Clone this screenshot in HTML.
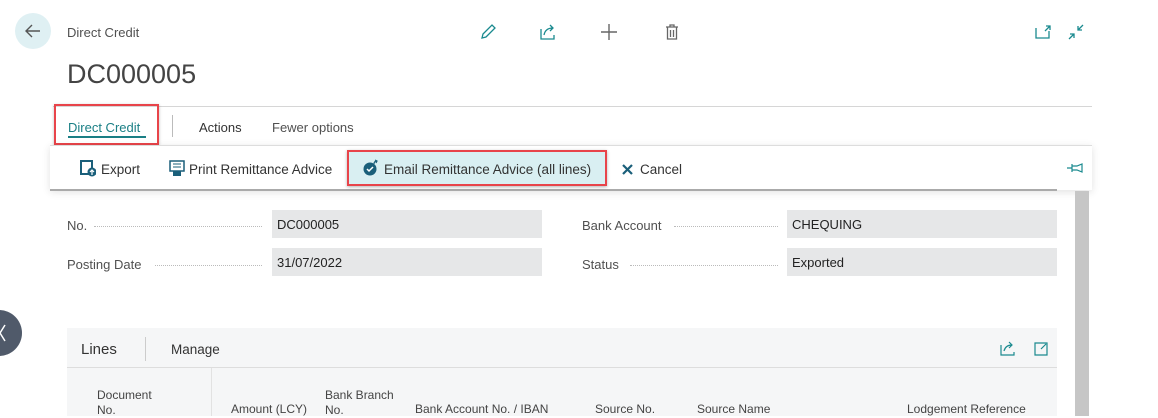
<!DOCTYPE html><html><head><style>
body{margin:0;width:1158px;height:416px;overflow:hidden;background:#fff;font-family:"Liberation Sans",sans-serif;position:relative;color:#333}
.a{position:absolute;white-space:nowrap}
.lbl{font-size:13px;color:#505050}
.box{position:absolute;background:#e6e7e8;font-size:13px;color:#222;line-height:29px;padding-left:5px;box-sizing:border-box}
.dots{position:absolute;border-bottom:1px dotted #bbb;height:0}
.h{font-size:12px;color:#444;position:absolute;line-height:15px}
</style></head><body>
<div class="a" style="left:15px;top:13px;width:36px;height:36px;border-radius:50%;background:#dff0f3"></div>
<svg class="a" style="left:24px;top:22px" width="18" height="18"><path d="M16 9H2M8 3L2 9l6 6" stroke="#555" stroke-width="1.4" fill="none"/></svg>
<div class="a lbl" style="left:67px;top:25px">Direct Credit</div>
<div class="a" style="left:67px;top:59px;font-size:27px;color:#444">DC000005</div>
<svg class="a" style="left:479px;top:23px" width="18" height="18"><path d="M3 15l1-4 9-9 3 3-9 9z" stroke="#1a8a8f" stroke-width="1.3" fill="none"/></svg>
<svg class="a" style="left:539px;top:23px" width="18" height="18"><path d="M2 6v10h13v-4M5 12c1-5 4-7 9-7M11 2l3 3-3 3" stroke="#1a8a8f" stroke-width="1.3" fill="none"/></svg>
<svg class="a" style="left:600px;top:23px" width="18" height="18"><path d="M9 1v16M1 9h16" stroke="#666" stroke-width="1.4"/></svg>
<svg class="a" style="left:664px;top:23px" width="16" height="18"><path d="M2 4h12M6 4V2h4v2M3.5 4v12h9V4M6.5 7v7M9.5 7v7" stroke="#666" stroke-width="1.3" fill="none"/></svg>
<svg class="a" style="left:1034px;top:24px" width="20" height="16"><path d="M2 4v10h13V7M12 2h4v4M16 2l-5 5" stroke="#1a8a8f" stroke-width="1.3" fill="none"/></svg>
<svg class="a" style="left:1067px;top:23px" width="18" height="18"><path d="M2 16l5-5M3 11h4v4M16 2l-5 5M11 3v4h4" stroke="#1a8a8f" stroke-width="1.3" fill="none"/></svg>
<div class="a" style="left:53px;top:106px;width:1039px;height:1px;background:#d6d6d6"></div>
<div class="a" style="left:68px;top:120px;font-size:13px;color:#1a7f85">Direct Credit</div>
<div class="a" style="left:68px;top:136px;width:78px;height:2px;background:#1a7f85"></div>
<div class="a" style="left:54px;top:104px;width:101px;height:37px;border:2px solid #e8444a;box-shadow:0 1px 3px rgba(0,0,0,.25)"></div>
<div class="a" style="left:172px;top:115px;width:1px;height:22px;background:#bbb"></div>
<div class="a" style="left:199px;top:120px;font-size:13px;color:#333">Actions</div>
<div class="a" style="left:272px;top:120px;font-size:13px;color:#505050">Fewer options</div>
<div class="a" style="left:50px;top:145px;width:1042px;height:44px;background:#fff;border-top:1px solid #ddd;box-shadow:0 2px 8px rgba(0,0,0,.12)"></div>
<div class="a" style="left:50px;top:189px;width:1007px;height:2px;background:#aaa"></div>
<div class="a" style="left:1075px;top:191px;width:14px;height:225px;background:#c6c6c6"></div>
<svg class="a" style="left:80px;top:160px" width="16" height="17"><rect x="1" y="1" width="11" height="13" fill="none" stroke="#1a5f7a" stroke-width="2"/><circle cx="12" cy="12" r="4.5" fill="#1a5f7a"/><path d="M12 15V10M10 12l2-2 2 2" stroke="#fff" stroke-width="1.2" fill="none"/></svg>
<div class="a" style="left:101px;top:162px;font-size:13.5px">Export</div>
<svg class="a" style="left:169px;top:160px" width="16" height="17"><rect x="1" y="1" width="14" height="10" fill="none" stroke="#1a5f7a" stroke-width="1.5"/><path d="M4 4h8M4 7h8" stroke="#1a5f7a"/><rect x="4" y="11" width="8" height="5" fill="#1a5f7a"/></svg>
<div class="a" style="left:189px;top:162px;font-size:13.5px">Print Remittance Advice</div>
<div class="a" style="left:349px;top:152px;width:256px;height:32px;background:#d9eff2"></div>
<div class="a" style="left:347px;top:150px;width:256px;height:32px;border:2px solid #e8444a;box-shadow:0 1px 3px rgba(0,0,0,.3)"></div>
<svg class="a" style="left:363px;top:159px" width="16" height="18"><circle cx="7" cy="10" r="6.5" fill="#1a5f7a"/><path d="M4 10l2 2 4-4" stroke="#fff" stroke-width="1.5" fill="none"/><path d="M11 5c0-2 1-3 3-3M12 1l2 1-1 2" stroke="#1a5f7a" stroke-width="1.2" fill="none"/></svg>
<div class="a" style="left:384px;top:162px;font-size:13.5px">Email Remittance Advice (all lines)</div>
<svg class="a" style="left:621px;top:163px" width="13" height="13"><path d="M2 2l9 9M11 2l-9 9" stroke="#1a5f7a" stroke-width="2.2"/></svg>
<div class="a" style="left:640px;top:162px;font-size:13.5px">Cancel</div>
<svg class="a" style="left:1066px;top:161px" width="20" height="14"><path d="M1 7h5M6 3v8M6 5h5l5-2v8l-5-2H6" stroke="#1a8a8f" stroke-width="1.2" fill="none"/></svg>
<div class="a lbl" style="left:67px;top:218px">No.</div><div class="dots" style="left:94px;top:226px;width:168px"></div>
<div class="box" style="left:272px;top:210px;width:270px;height:28px">DC000005</div>
<div class="a lbl" style="left:67px;top:257px">Posting Date</div><div class="dots" style="left:155px;top:265px;width:107px"></div>
<div class="box" style="left:272px;top:248px;width:270px;height:28px">31/07/2022</div>
<div class="a lbl" style="left:582px;top:218px">Bank Account</div><div class="dots" style="left:674px;top:226px;width:104px"></div>
<div class="box" style="left:787px;top:210px;width:270px;height:28px">CHEQUING</div>
<div class="a lbl" style="left:582px;top:257px">Status</div><div class="dots" style="left:630px;top:265px;width:148px"></div>
<div class="box" style="left:787px;top:248px;width:270px;height:28px">Exported</div>
<div class="a" style="left:-24px;top:310px;width:46px;height:46px;border-radius:50%;background:#505a6a"></div>
<svg class="a" style="left:0;top:323px" width="8" height="20"><path d="M5 2L0 10l5 8" stroke="#fff" stroke-width="1.5" fill="none"/></svg>
<div class="a" style="left:67px;top:328px;width:990px;height:88px;background:#f5f6f7"></div>
<div class="a" style="left:67px;top:367px;width:990px;height:1px;background:#ddd"></div>
<div class="a" style="left:81px;top:341px;font-size:15px;color:#333">Lines</div>
<div class="a" style="left:145px;top:337px;width:1px;height:24px;background:#ccc"></div>
<div class="a" style="left:171px;top:342px;font-size:13.5px;color:#333">Manage</div>
<svg class="a" style="left:999px;top:340px" width="18" height="16"><path d="M2 5v10h13v-3M5 11c1-4 4-6 8-6M10 2l3 3-3 3" stroke="#1a8a8f" stroke-width="1.2" fill="none"/></svg>
<svg class="a" style="left:1033px;top:340px" width="16" height="16"><path d="M2 3v12h12V3zM8 9l5-5M10 3h4v4" stroke="#1a8a8f" stroke-width="1.2" fill="none"/></svg>
<div class="a" style="left:211px;top:368px;width:1px;height:48px;background:#e2e2e2"></div>
<div class="h" style="left:97px;top:388px">Document<br>No.</div>
<div class="h" style="left:231px;top:402px">Amount (LCY)</div>
<div class="h" style="left:325px;top:388px">Bank Branch<br>No.</div>
<div class="h" style="left:415px;top:402px">Bank Account No. / IBAN</div>
<div class="h" style="left:595px;top:402px">Source No.</div>
<div class="h" style="left:697px;top:402px">Source Name</div>
<div class="h" style="left:907px;top:402px">Lodgement Reference</div>
</body></html>
